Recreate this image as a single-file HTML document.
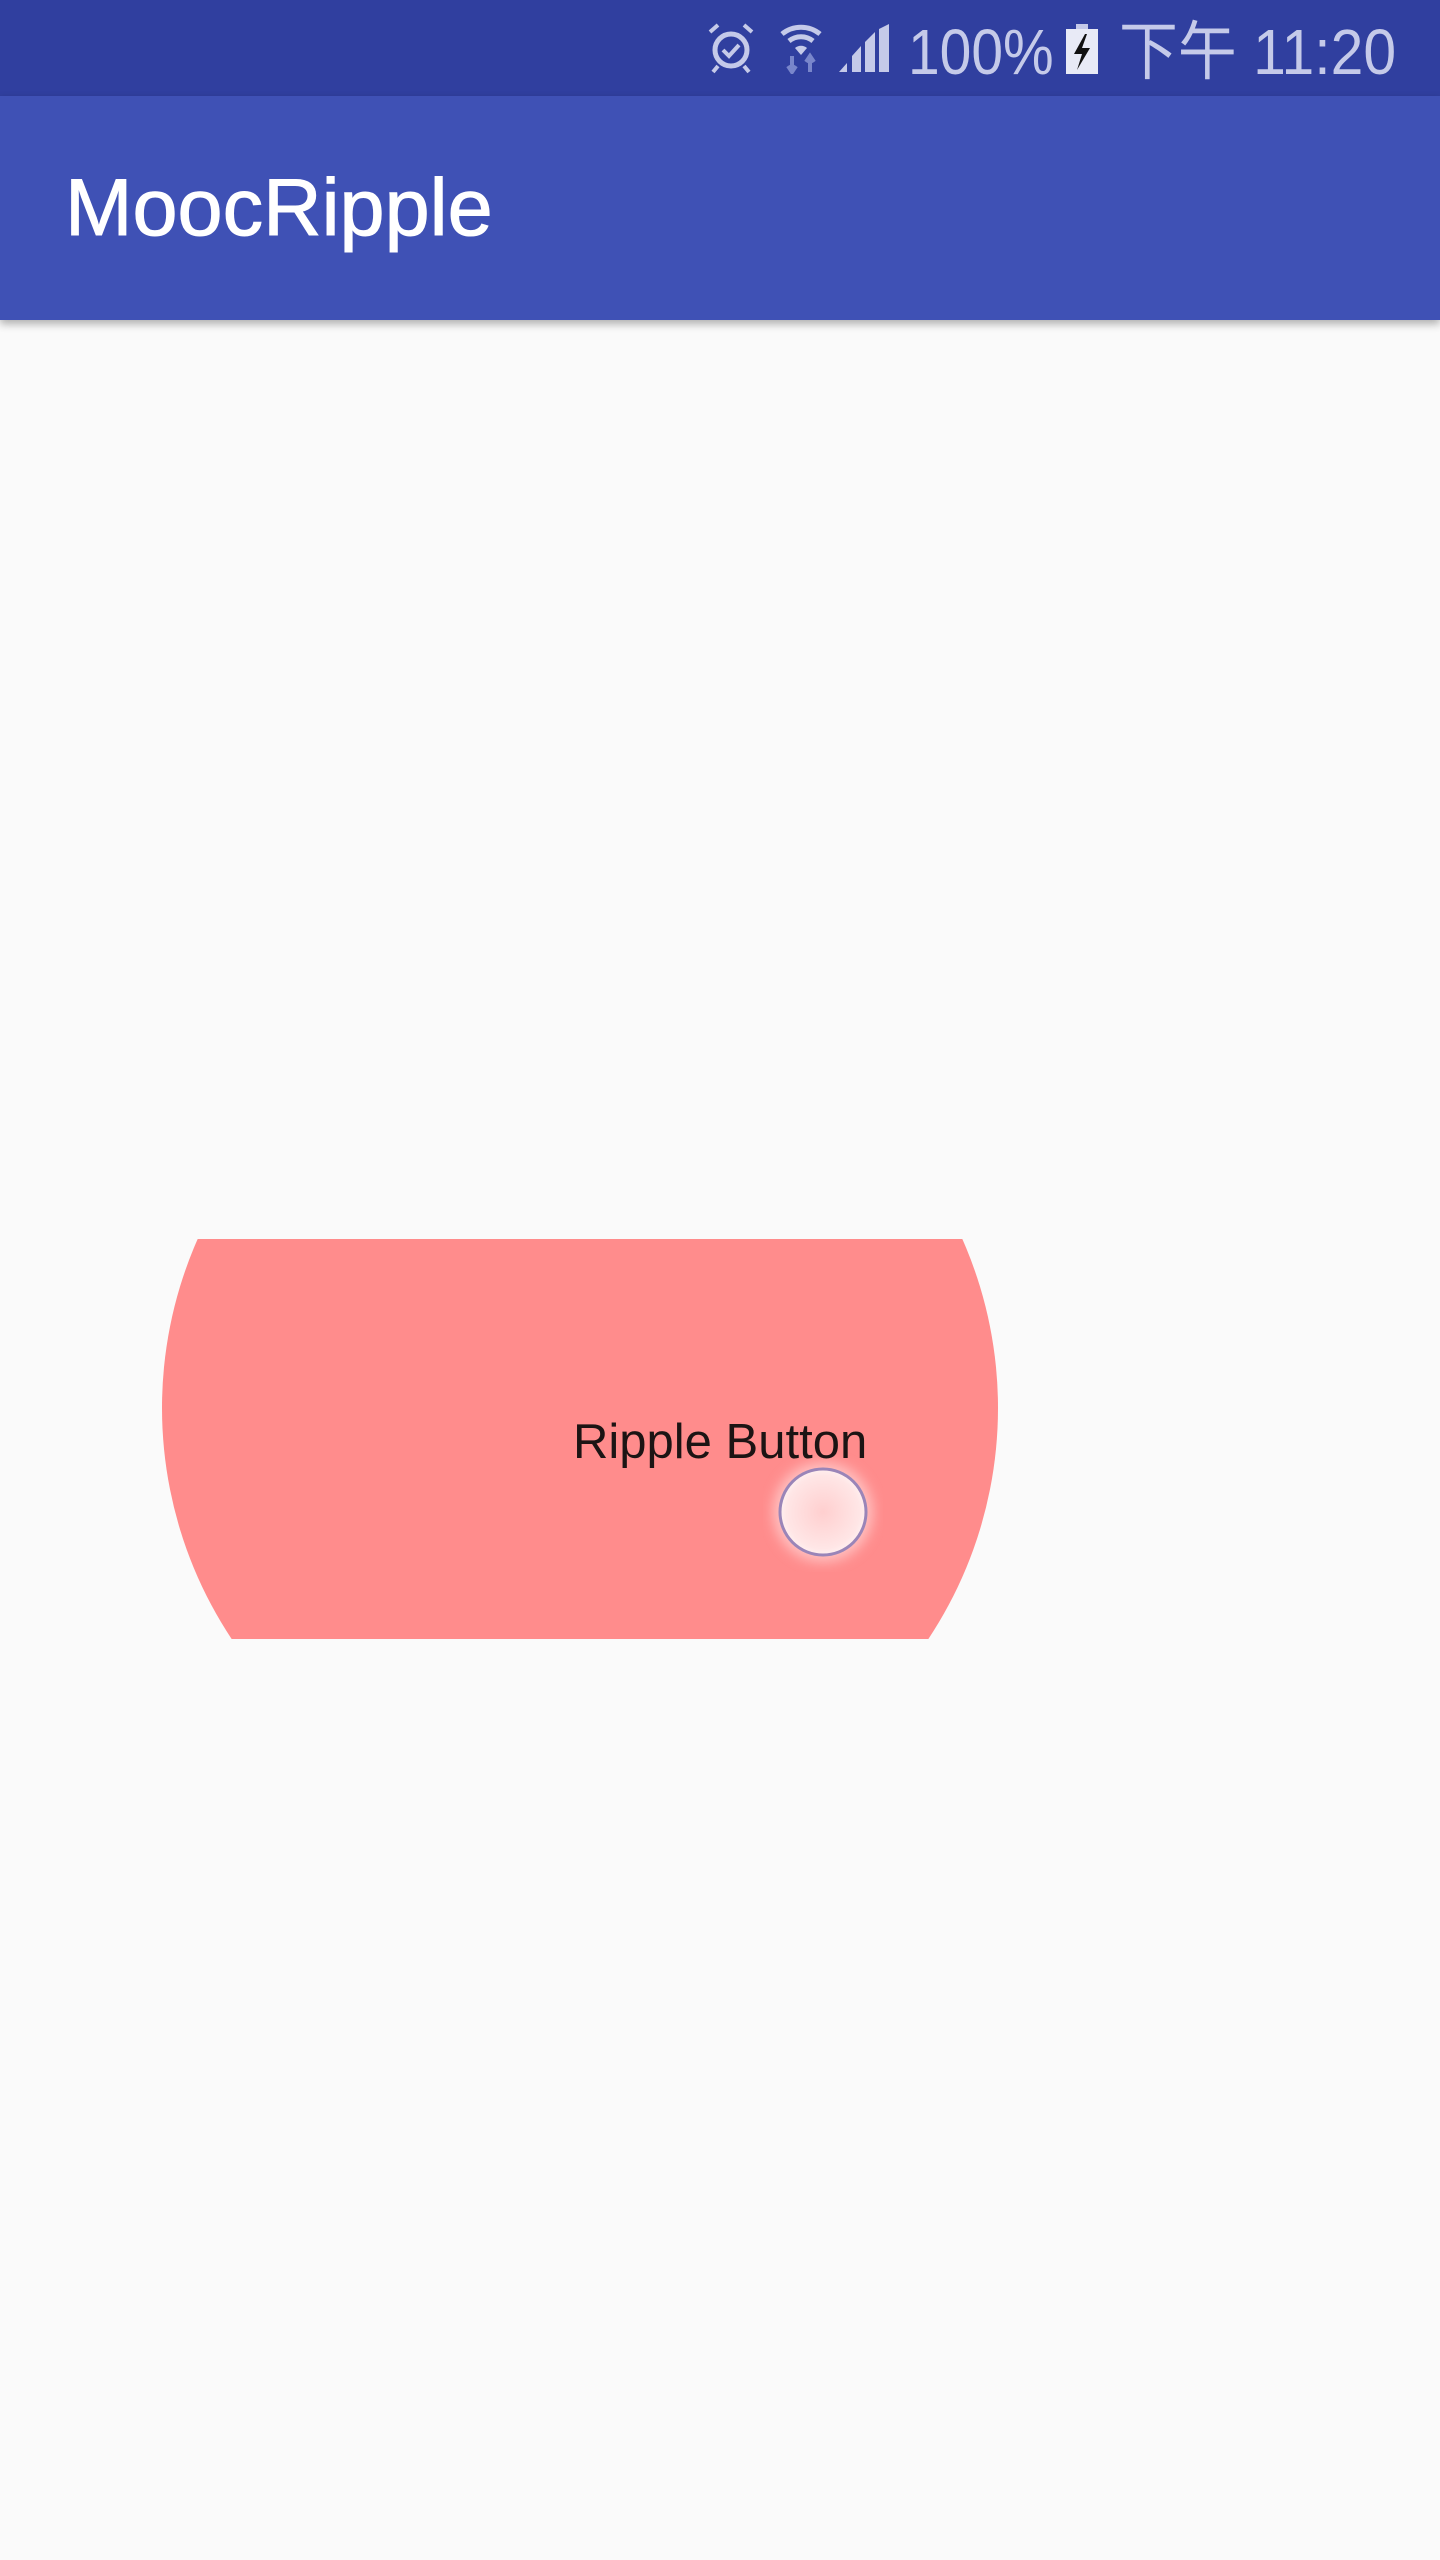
<!DOCTYPE html>
<html><head><meta charset="utf-8"><style>
*{margin:0;padding:0;box-sizing:border-box}
body{width:1440px;height:2560px;background:#fafafa;position:relative;overflow:hidden;font-family:"Liberation Sans","Noto Sans CJK SC",sans-serif}
#sb{position:absolute;left:0;top:0;width:1440px;height:96px;background:#303F9F}
#ab{position:absolute;left:0;top:96px;width:1440px;height:224px;background:#3F51B5;box-shadow:0 4px 8px rgba(0,0,0,.3)}
#title{position:absolute;left:65px;top:72px;font-size:81px;color:#fff;line-height:80px;-webkit-text-stroke:1px #fff}
.st{position:absolute;color:#c5cae9;font-size:64px;line-height:64px;top:20px;white-space:nowrap;transform-origin:0 0}
#btn{position:absolute;left:0;top:0}
#txt{position:absolute;left:573px;top:1414px;font-size:49px;line-height:56px;color:#1c1414}
</style></head><body>
<div id="sb">
<svg style="position:absolute;left:706px;top:22px" width="50" height="52" viewBox="0 0 50 52">
<circle cx="25" cy="28" r="16" fill="none" stroke="#c5cae9" stroke-width="5"/>
<path d="M17 28l6 6 10-11" fill="none" stroke="#c5cae9" stroke-width="4"/>
<path d="M4 10l8-7M46 10l-8-7M12 44l-5 6M38 44l5 6" stroke="#c5cae9" stroke-width="4"/>
</svg>
<svg style="position:absolute;left:779px;top:22px" width="44" height="52" viewBox="0 0 44 52">
<path d="M3 12a30 30 0 0 1 38 0" fill="none" stroke="#c5cae9" stroke-width="5"/>
<path d="M10 19a19 19 0 0 1 24 0" fill="none" stroke="#c5cae9" stroke-width="5"/>
<path d="M16 26a9 9 0 0 1 12 0l-6 7z" fill="#c5cae9"/>
<path d="M13 34v16M9 44l4 6 4-6M31 50v-16M27 40l4-6 4 6" stroke="#7986cb" stroke-width="4" fill="none"/>
</svg>
<svg style="position:absolute;left:839px;top:24px" width="52" height="48" viewBox="0 0 52 48">
<path d="M0 48l8-9v9zM13 48V32l9-10v26zM26 48V18l10-10v40zM40 48V5l10-5v48z" fill="#c5cae9"/>
</svg>
<div class="st" style="left:908px;transform:scaleX(0.89)">100%</div>
<svg style="position:absolute;left:1066px;top:24px" width="32" height="50" viewBox="0 0 32 50">
<rect x="10" y="0" width="12" height="5" fill="#c5cae9"/><rect x="0" y="5" width="32" height="45" fill="#e8eaf6"/>
<path d="M19 10L8 30h8l-5 16 13-22h-8l5-14z" fill="#111"/>
</svg>
<div class="st" style="left:1119px;transform:scaleX(0.92)">下午 11:20</div>
</div>
<div id="ab"><div id="title">MoocRipple</div></div>
<svg id="btn" width="1440" height="2560">
<defs><clipPath id="c"><rect x="0" y="1239" width="1440" height="400"/></clipPath>
<radialGradient id="g"><stop offset="0" stop-color="#ffcfcf"/><stop offset="0.85" stop-color="#ffe6e6"/><stop offset="1" stop-color="#fff0f0"/></radialGradient>
<filter id="b"><feGaussianBlur stdDeviation="6"/></filter></defs>
<circle cx="580" cy="1408" r="418" fill="#FF8C8C" clip-path="url(#c)"/>
<circle cx="823" cy="1512" r="50" fill="#ffc0c0" filter="url(#b)"/>
<circle cx="823" cy="1512" r="43" fill="url(#g)" stroke="#9a85b8" stroke-width="3"/>
</svg>
<div id="txt">Ripple Button</div>
</body></html>
